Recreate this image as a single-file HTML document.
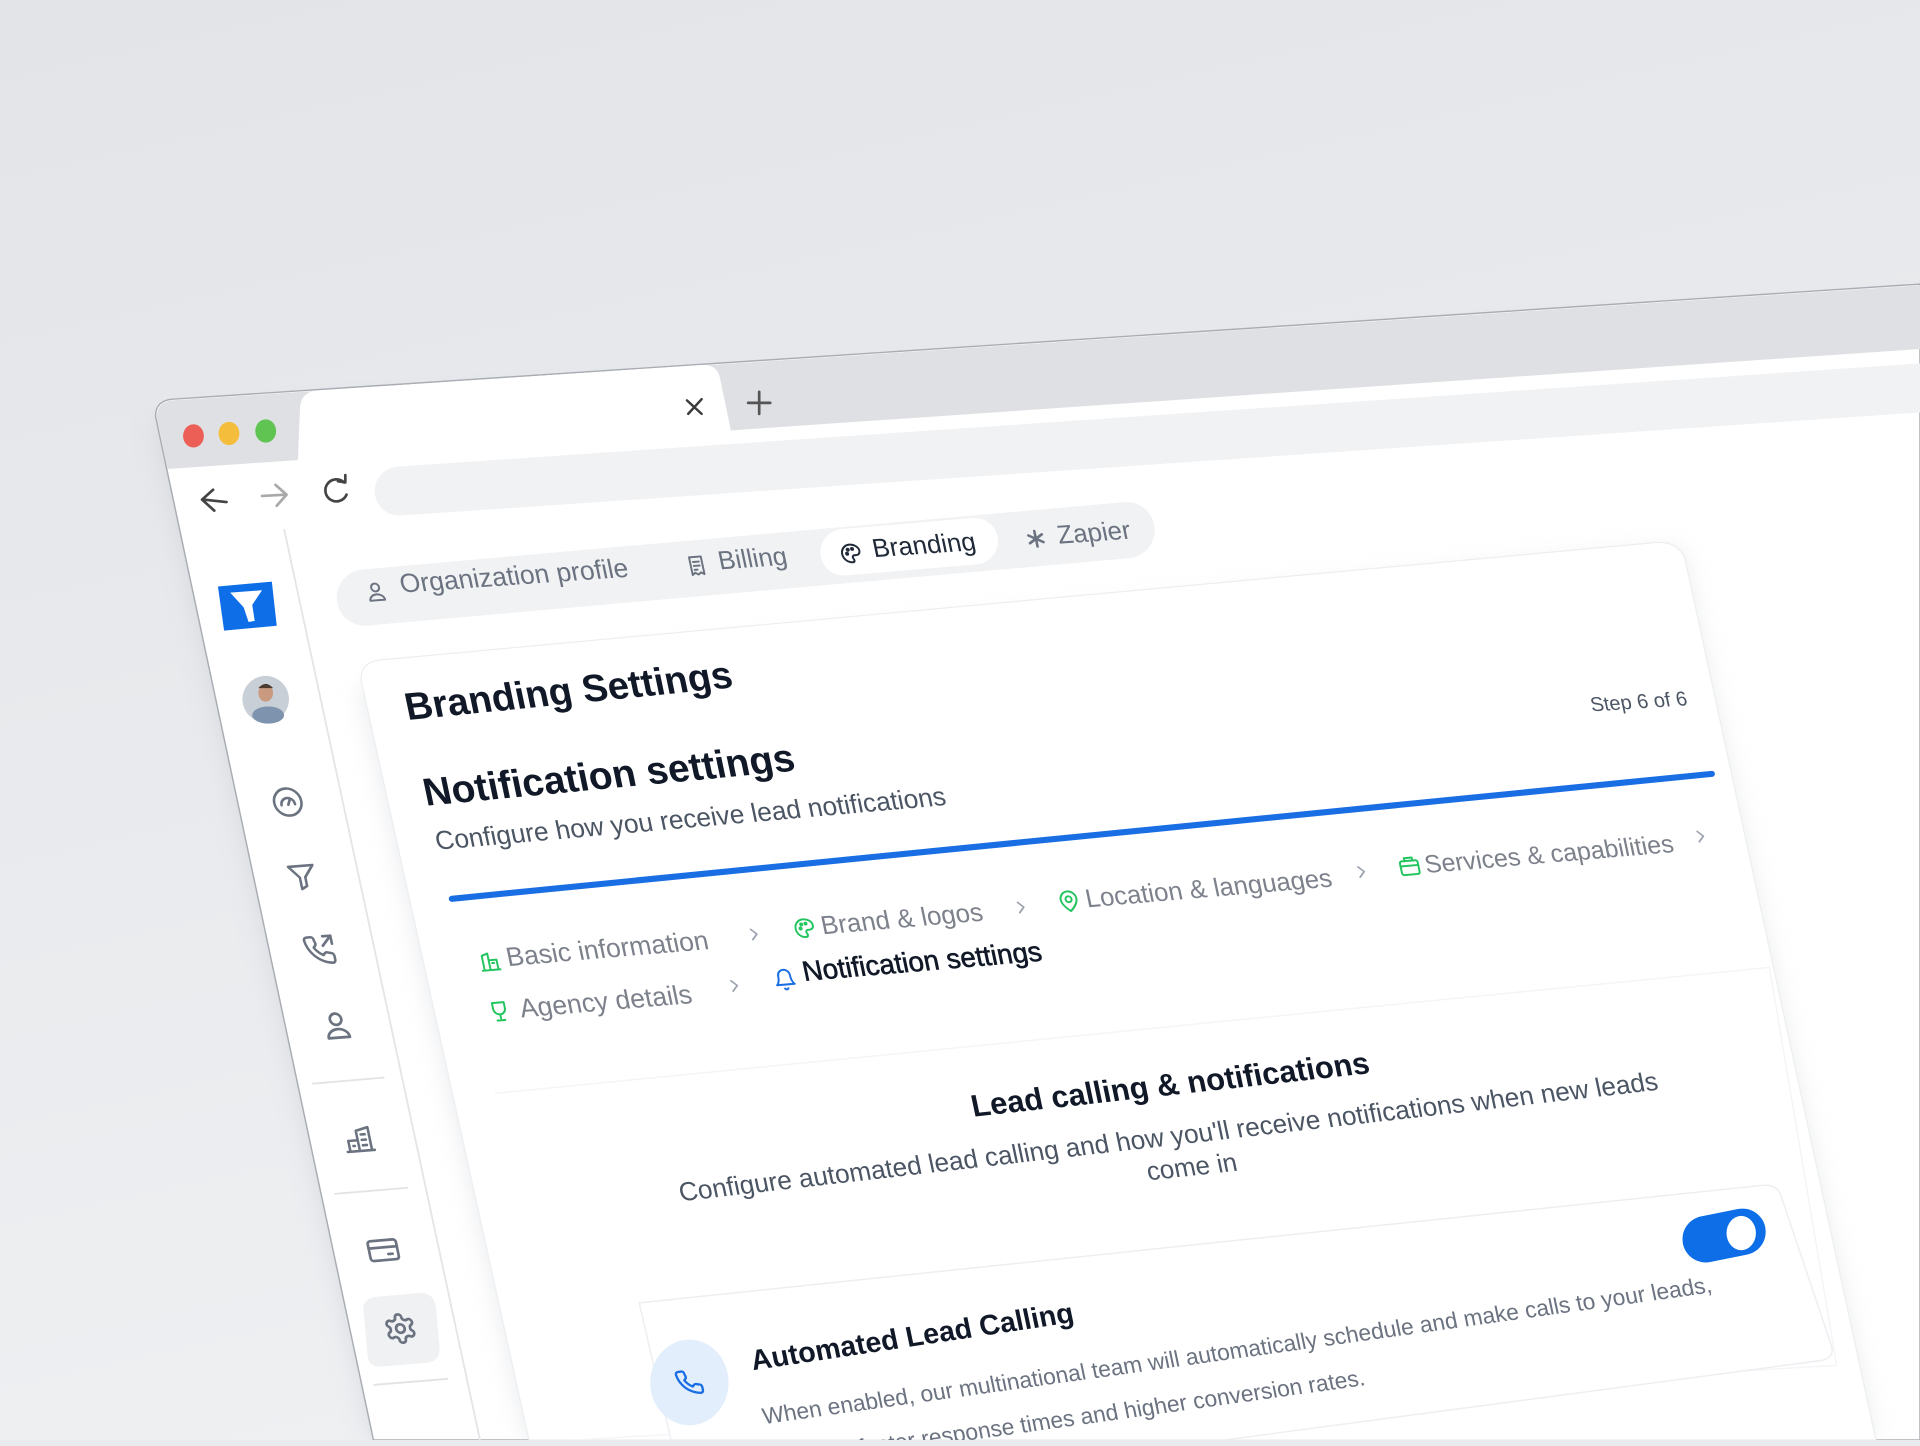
<!DOCTYPE html>
<html><head><meta charset="utf-8"><style>
html,body{margin:0;padding:0;width:1920px;height:1440px;overflow:hidden;background:#e9ebee}
#s{position:absolute;left:0;top:0;width:1568px;height:1176px;transform:scale(1.22449);transform-origin:0 0}
text{font-family:"Liberation Sans",Arial,sans-serif}
</style></head><body><div id="s">
<svg width="1568" height="1176" viewBox="0 0 1568 1176" xmlns="http://www.w3.org/2000/svg">
<defs>
<linearGradient id="bg" x1="0" y1="0" x2="0.3" y2="1"><stop offset="0" stop-color="#e2e4e8"/><stop offset="1" stop-color="#eef0f2"/></linearGradient>
<filter id="sh" x="-10%" y="-10%" width="120%" height="120%"><feGaussianBlur stdDeviation="10"/></filter>
<filter id="sh2" x="-10%" y="-10%" width="120%" height="120%"><feGaussianBlur stdDeviation="6"/></filter>
<g id="i-user" transform="translate(-12,-12)"><circle cx="12" cy="8" r="4"/><path d="M4.5 21a7.5 6 0 0 1 15 0z"/></g>
<g id="i-receipt" transform="translate(-12,-12)"><path d="M6 3h12v18l-3-2-3 2-3-2-3 2z"/><path d="M9 8h6M9 12h6M9 16h3"/></g>
<g id="i-palette" transform="translate(-12,-12)"><path d="M12 3a9 9 0 1 0 0 18c1.5 0 2-1 2-2 0-1.5-1-1.5-1-3 0-1 1-2 2-2h2a4 4 0 0 0 4-4c0-4-4-7-9-7z"/><circle cx="8" cy="12" r="1" fill="currentColor"/><circle cx="9.5" cy="8" r="1" fill="currentColor"/><circle cx="14" cy="7.5" r="1" fill="currentColor"/></g>
<g id="i-ast" transform="translate(-12,-12)"><path d="M12 3v18M4.2 7.5l15.6 9M4.2 16.5l15.6-9" stroke-width="3"/></g>
<g id="i-gauge" transform="translate(-12,-12)"><circle cx="12" cy="12" r="10"/><path d="M7 14a5 5 0 1 1 10 0"/><path d="M12 14l2-4"/></g>
<g id="i-funnel" transform="translate(-12,-12)"><path d="M3 4h18l-7 8.5V19l-4 2v-8.5z"/></g>
<g id="i-phoneout" transform="translate(-12,-12)"><path d="M22 16.9v3a2 2 0 0 1-2.2 2 19.8 19.8 0 0 1-8.6-3.1 19.5 19.5 0 0 1-6-6A19.8 19.8 0 0 1 2.1 4.2 2 2 0 0 1 4.1 2h3a2 2 0 0 1 2 1.7c.1.9.4 1.8.7 2.7a2 2 0 0 1-.5 2.1L8.1 9.8a16 16 0 0 0 6 6l1.3-1.3a2 2 0 0 1 2.1-.4c.9.3 1.8.6 2.7.7a2 2 0 0 1 1.7 2z"/><path d="M16 2h6v6M22 2l-7 7"/></g>
<g id="i-phone" transform="translate(-12,-12)"><path d="M22 16.9v3a2 2 0 0 1-2.2 2 19.8 19.8 0 0 1-8.6-3.1 19.5 19.5 0 0 1-6-6A19.8 19.8 0 0 1 2.1 4.2 2 2 0 0 1 4.1 2h3a2 2 0 0 1 2 1.7c.1.9.4 1.8.7 2.7a2 2 0 0 1-.5 2.1L8.1 9.8a16 16 0 0 0 6 6l1.3-1.3a2 2 0 0 1 2.1-.4c.9.3 1.8.6 2.7.7a2 2 0 0 1 1.7 2z"/></g>
<g id="i-bld" transform="translate(-12,-12)"><path d="M2 21h20M4 21v-8h7v8M11 21V6l9-2v17M14 9h3M14 13h3M14 17h3M7 17h1"/></g>
<g id="i-card" transform="translate(-12,-12)"><rect x="2" y="5" width="20" height="14" rx="2"/><path d="M2 10h20M15 15h3"/></g>
<g id="i-gear" transform="translate(-12,-12)"><path d="M12.22 2h-.44a2 2 0 0 0-2 2v.18a2 2 0 0 1-1 1.730l-.43.25a2 2 0 0 1-2 0l-.15-.08a2 2 0 0 0-2.73.73l-.22.38a2 2 0 0 0 .73 2.73l.15.1a2 2 0 0 1 1 1.72v.51a2 2 0 0 1-1 1.74l-.15.09a2 2 0 0 0-.73 2.73l.22.38a2 2 0 0 0 2.73.73l.15-.08a2 2 0 0 1 2 0l.43.25a2 2 0 0 1 1 1.73V20a2 2 0 0 0 2 2h.44a2 2 0 0 0 2-2v-.18a2 2 0 0 1 1-1.73l.43-.25a2 2 0 0 1 2 0l.15.08a2 2 0 0 0 2.73-.73l.22-.39a2 2 0 0 0-.73-2.73l-.15-.08a2 2 0 0 1-1-1.74v-.5a2 2 0 0 1 1-1.74l.15-.09a2 2 0 0 0 .73-2.73l-.22-.38a2 2 0 0 0-2.73-.73l-.15.08a2 2 0 0 1-2 0l-.43-.25a2 2 0 0 1-1-1.73V4a2 2 0 0 0-2-2z"/><circle cx="12" cy="12" r="3"/></g>
<g id="i-bldsm" transform="translate(-12,-12)"><path d="M3 21h18M5 21V6l6-2v17M11 21V11l8 0v10M14 14h2"/></g>
<g id="i-pin" transform="translate(-12,-12)"><path d="M20 10c0 6-8 12-8 12s-8-6-8-12a8 8 0 0 1 16 0z"/><circle cx="12" cy="10" r="3"/></g>
<g id="i-brief" transform="translate(-12,-12)"><rect x="3" y="7" width="18" height="14" rx="2"/><path d="M8 7V4h8v3M3 12h18"/></g>
<g id="i-trophy" transform="translate(-12,-12)"><path d="M6 3h12v6a6 6 0 0 1-12 0z"/><path d="M12 15v4M8 21h8"/></g>
<g id="i-bell" transform="translate(-12,-12)"><path d="M6 8a6 6 0 0 1 12 0c0 7 3 9 3 9H3s3-2 3-9"/><path d="M10.3 21a1.94 1.94 0 0 0 3.4 0"/></g>
<g id="i-chev" transform="translate(-12,-12)"><path d="M9 6l6 6-6 6"/></g>
</defs>

<rect width="1568" height="1176" fill="url(#bg)"/>
<path d="M127,345 L1568,250 L1568,1176 L305,1176 Z" fill="#c9ccd2" opacity="0.6" filter="url(#sh)"/>
<path d="M127,340 Q127,327 141,326 L1568,232 L1568,1176 L305,1176 Z" fill="#ffffff" stroke="#a9adb3" stroke-width="1.2"/>
<path d="M128,341 Q128,328 141,327 L1568,233 L1568,285 L137,383 Z" fill="#dfe0e3"/>
<path d="M243,383 L245,333 Q246,320 259,319 L574,298 Q586,298 588,309 L597,352 L600,360 L241,386 Z" fill="#ffffff"/>
<path d="M561,327 l12,11 M573,326 l-11,12" stroke="#3b3b3b" stroke-width="2" stroke-linecap="round"/>
<path d="M620,320 v18 M611,329 h18" stroke="#555" stroke-width="2.2" stroke-linecap="round"/>
<ellipse cx="158" cy="356" rx="8.5" ry="9.5" fill="#ec5f57"/>
<ellipse cx="187" cy="354" rx="8.5" ry="9.5" fill="#f4bd3b"/>
<ellipse cx="217" cy="352" rx="8.5" ry="9.5" fill="#5fc451"/>
<path d="M185,410 L166,408 M174,400 L165,408 L175,417" stroke="#444" stroke-width="2.2" fill="none" stroke-linecap="round" stroke-linejoin="round"/>
<path d="M214,405 L233,404 M225,396 L234,404 L226,413" stroke="#a9a9a9" stroke-width="2.2" fill="none" stroke-linecap="round" stroke-linejoin="round"/>
<path d="M281,394 A9 9 0 1 0 283,404" stroke="#444" stroke-width="2.2" fill="none" stroke-linecap="round"/>
<path d="M276,393 L282,394 L282,388" stroke="#444" stroke-width="2.2" fill="none" stroke-linecap="round" stroke-linejoin="round"/>
<line x1="326" y1="401" x2="1580" y2="316" stroke="#f1f2f4" stroke-width="40" stroke-linecap="round"/>
<line x1="232" y1="432" x2="392" y2="1176" stroke="#e3e5e8" stroke-width="1.5"/>
<line x1="298" y1="488" x2="920" y2="433" stroke="#f1f2f4" stroke-width="46" stroke-linecap="round"/>
<line x1="690" y1="452" x2="796" y2="443" stroke="#d9dbdf" stroke-width="40" stroke-linecap="round" opacity="0.5" filter="url(#sh2)"/>
<line x1="689" y1="451" x2="796" y2="442" stroke="#ffffff" stroke-width="38" stroke-linecap="round"/>
<path d="M295,560 L1372,448 L1530,1176 L432,1176 Z" fill="#d5d8dd" opacity="0.55" filter="url(#sh)"/>
<path d="M295,556 Q294,541 310,539 L1353,443 Q1370,442 1376,456 L1532,1176 L432,1176 Z" fill="#ffffff" stroke="#eceef0" stroke-width="1"/>
<path d="M404,893 L1445,790 L1500,1115 L470,1176" fill="none" stroke="#f4f5f7" stroke-width="1.2"/>
<path d="M522,1064 L1440,968 Q1452,967 1455,978 L1496,1100 Q1498,1108 1488,1111 L1000,1176 L548,1176 Z" fill="#ffffff" stroke="#eceef1" stroke-width="1.2"/>
<line x1="369" y1="734" x2="1398" y2="632" stroke="#1a6ee3" stroke-width="5" stroke-linecap="round"/>
<path d="M178,479 L222,475 L226,511 L183,515 Z" fill="#0d6ee8"/>
<path d="M188,484 L214,482 L206,494 L208,507 L203,508 L199,496 Z" fill="#ffffff"/>
<ellipse cx="217" cy="571" rx="19" ry="19" fill="#c9cfd6"/>
<ellipse cx="219" cy="584" rx="13" ry="7" fill="#7e93ad"/>
<ellipse cx="217" cy="566" rx="6" ry="7" fill="#c99a80"/>
<path d="M211,562 q6,-7 12,0" fill="#4a3a30"/>
<g fill="none" stroke="#6b7280" stroke-width="1.9" stroke-linecap="round" stroke-linejoin="round" color="#6b7280">
<use href="#i-gauge" transform="matrix(1.1,-0.09,0.23,1.1,235,655)"/>
<use href="#i-funnel" transform="matrix(1.1,-0.09,0.23,1.1,247,716)"/>
<use href="#i-phoneout" transform="matrix(1.1,-0.09,0.23,1.1,261,776)"/>
<use href="#i-user" transform="matrix(1.15,-0.09,0.24,1.15,275,837)"/>
<use href="#i-bld" transform="matrix(1.1,-0.09,0.23,1.1,293,930)"/>
<use href="#i-card" transform="matrix(1.15,-0.1,0.24,1.15,313,1021)"/>
</g>
<line x1="255" y1="885" x2="314" y2="880" stroke="#e1e3e6" stroke-width="1.5"/>
<line x1="273" y1="975" x2="333" y2="970" stroke="#e1e3e6" stroke-width="1.5"/>
<line x1="305" y1="1131" x2="366" y2="1126" stroke="#e1e3e6" stroke-width="1.5"/>
<path d="M297,1072 Q295,1060 308,1059 L342,1056 Q354,1055 356,1067 L359,1100 Q360,1112 348,1113 L312,1116 Q300,1117 300,1105 Z" fill="#f0f1f3"/>
<g fill="none" stroke="#6b7280" stroke-width="1.9" stroke-linecap="round" stroke-linejoin="round">
<use href="#i-gear" transform="matrix(1.15,-0.1,0.24,1.15,327,1085)"/>
</g>

<g fill="none" stroke-width="2" stroke-linecap="round" stroke-linejoin="round">
<use href="#i-user" stroke="#6b7280" transform="matrix(0.8,-0.06,0.17,0.8,307,483)"/>
<use href="#i-receipt" stroke="#6b7280" transform="matrix(0.8,-0.06,0.17,0.8,569,462)"/>
<use href="#i-palette" stroke="#1f2937" color="#1f2937" transform="matrix(0.8,-0.06,0.17,0.8,695,452)"/>
<use href="#i-ast" stroke="#6b7280" transform="matrix(0.7,-0.06,0.15,0.7,846,440)"/>
</g>
<g font-size="21" fill="#6b7280">
<text transform="matrix(1,-0.07,0.21,1,328,484)" font-size="21.5">Organization profile</text>
<text transform="matrix(1,-0.07,0.21,1,588,465)">Billing</text>
<text transform="matrix(1,-0.07,0.21,1,714,455)" fill="#1f2937">Branding</text>
<text transform="matrix(1,-0.07,0.21,1,865,444)">Zapier</text>
</g>

<text transform="matrix(1,-0.1,0.21,1,333,588)" font-size="31" font-weight="700" fill="#111827">Branding Settings</text>
<text transform="matrix(1,-0.065,0.21,1,1300,581)" font-size="16.3" fill="#4b5563">Step 6 of 6</text>
<text transform="matrix(1,-0.095,0.21,1,348,658)" font-size="31.5" font-weight="700" fill="#111827">Notification settings</text>
<text transform="matrix(1,-0.088,0.21,1,357,694)" font-size="21.3" fill="#4b5563">Configure how you receive lead notifications</text>

<g fill="none" stroke="#22c55e" stroke-width="2" stroke-linecap="round" stroke-linejoin="round" color="#22c55e">
<use href="#i-bldsm" transform="matrix(0.8,-0.07,0.17,0.8,400,785)"/>
<use href="#i-palette" transform="matrix(0.8,-0.07,0.17,0.8,657,758)"/>
<use href="#i-pin" transform="matrix(0.8,-0.07,0.17,0.8,873,736)"/>
<use href="#i-brief" transform="matrix(0.8,-0.07,0.17,0.8,1151,707)"/>
<use href="#i-trophy" transform="matrix(0.8,-0.07,0.17,0.8,408,826)"/>
<use href="#i-bell" stroke="#1a6ee3" transform="matrix(0.8,-0.07,0.17,0.8,641,800)"/>
</g>
<g fill="none" stroke="#9ca3af" stroke-width="2" stroke-linecap="round" stroke-linejoin="round">
<use href="#i-chev" transform="matrix(0.7,-0.06,0.15,0.7,616,763)"/>
<use href="#i-chev" transform="matrix(0.7,-0.06,0.15,0.7,834,741)"/>
<use href="#i-chev" transform="matrix(0.7,-0.06,0.15,0.7,1112,712)"/>
<use href="#i-chev" transform="matrix(0.7,-0.06,0.15,0.7,1389,683)"/>
<use href="#i-chev" transform="matrix(0.7,-0.06,0.15,0.7,600,805)"/>
</g>
<g font-size="21" fill="#7c818b">
<text transform="matrix(1,-0.085,0.21,1,415,789)" font-size="21.5">Basic information</text>
<text transform="matrix(1,-0.085,0.21,1,672,763)">Brand &amp; logos</text>
<text transform="matrix(1,-0.085,0.21,1,888,741)" font-size="20.9">Location &amp; languages</text>
<text transform="matrix(1,-0.085,0.21,1,1165,713)" font-size="20.3">Services &amp; capabilities</text>
<text transform="matrix(1,-0.085,0.21,1,426,831)" font-size="21.6">Agency details</text>
<text transform="matrix(1,-0.085,0.21,1,657,801)" font-size="22.5" fill="#111827" stroke="#111827" stroke-width="0.5">Notification settings</text>
</g>

<text transform="matrix(1,-0.11,0.21,1,795,912)" font-size="25" font-weight="700" fill="#111827">Lead calling &amp; notifications</text>
<text transform="matrix(1,-0.114,0.21,1,556,981)" font-size="21.2" fill="#4b5563">Configure automated lead calling and how you'll receive notifications when new leads</text>
<text transform="matrix(1,-0.11,0.21,1,938,964)" font-size="21" fill="#4b5563">come in</text>

<line x1="1393" y1="1012" x2="1423" y2="1006" stroke="#0d6ee8" stroke-width="38" stroke-linecap="round"/>
<ellipse cx="1422" cy="1007" rx="12" ry="14" fill="#ffffff"/>

<ellipse cx="563" cy="1129" rx="32" ry="35" fill="#e3eefc"/>
<use href="#i-phone" fill="none" stroke="#1a6ee3" stroke-width="2" stroke-linecap="round" stroke-linejoin="round" transform="matrix(0.95,-0.12,0.2,0.95,563,1129)"/>
<text transform="matrix(1,-0.15,0.21,1,615,1119)" font-size="23" font-weight="700" fill="#111827">Automated Lead Calling</text>
<text transform="matrix(1,-0.139,0.21,1,624,1163)" font-size="18.4" fill="#6b7280">When enabled, our multinational team will automatically schedule and make calls to your leads,</text>
<text transform="matrix(1,-0.139,0.21,1,627,1199)" font-size="18.4" fill="#6b7280">ensuring faster response times and higher conversion rates.</text>
</svg>
</div></body></html>
